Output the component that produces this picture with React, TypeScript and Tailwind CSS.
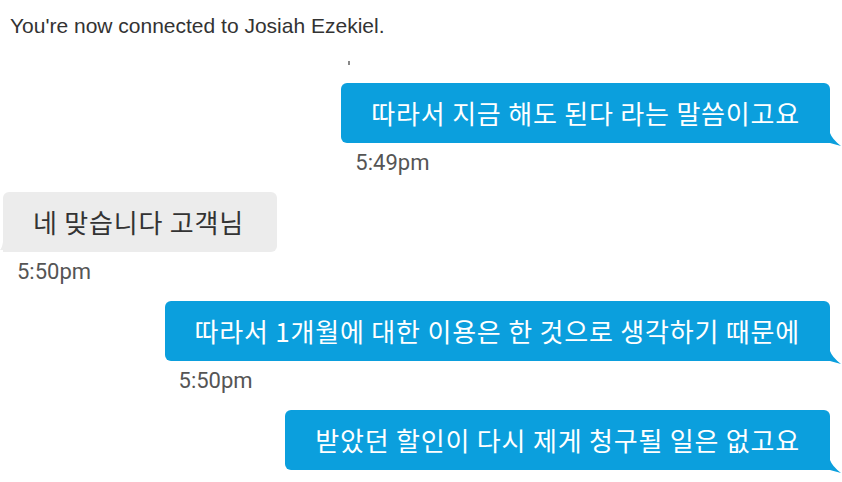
import type { ReactNode } from 'react';

type Msg = { side: 'me' | 'them'; text: string; time?: string };

const messages: Msg[] = [
  { side: 'me', text: '따라서 지금 해도 된다 라는 말씀이고요', time: '5:49pm' },
  { side: 'them', text: '네 맞습니다 고객님', time: '5:50pm' },
  { side: 'me', text: '따라서 1개월에 대한 이용은 한 것으로 생각하기 때문에', time: '5:50pm' },
  { side: 'me', text: '받았던 할인이 다시 제게 청구될 일은 없고요' },
];

const korean = { fontFamily: '"Noto Sans CJK KR", "Noto Sans", sans-serif' };
const stamp = { fontFamily: 'Roboto, "Noto Sans", sans-serif' };

function Bubble({ side, children }: { side: Msg['side']; children: ReactNode }) {
  const mine = side === 'me';
  return (
    <div
      className={
        mine
          ? 'relative h-[60px] flex items-center rounded-md rounded-br-none bg-[#0b9fdd] px-[30px] text-white'
          : 'relative h-[60px] flex items-center rounded-md rounded-bl-none bg-[#ececec] pl-[30px] pr-[33px] text-[#333]'
      }
    >
      <span className="text-[26px] leading-none tracking-[0.8px] whitespace-nowrap" style={korean}>
        {children}
      </span>
      {mine ? (
        <svg className="absolute left-full bottom-[-3px]" width="11" height="13" viewBox="0 0 11 13">
          <path d="M0 0 Q2 6 11 13 L0 10 Z" fill="#0b9fdd" />
        </svg>
      ) : (
        <svg className="absolute right-full bottom-[2px]" width="3" height="8" viewBox="0 0 3 8">
          <path d="M3 0 Q2 6 0 8 L3 8 Z" fill="#ececec" />
        </svg>
      )}
    </div>
  );
}

export default function App() {
  return (
    <div className="w-[842px] h-[482px] overflow-hidden bg-white">
      <p
        className="pl-[10px] pt-[14px] text-[21px] leading-[24px] text-[#333]"
        style={{ fontFamily: '"Liberation Sans", Arial, sans-serif' }}
      >
        You're now connected to Josiah Ezekiel.
      </p>

      <div className="flex flex-col pr-[12px] pl-[3px] mt-[23px]">
        {messages.map((m, i) => (
          <div
            key={i}
            className={
              (m.side === 'me' ? 'self-end' : 'self-start') +
              ' flex flex-col items-start ' +
              (i === 0 ? '' : 'mt-[17px]')
            }
          >
            {i === 0 && <div className="ml-[7px] mb-[18px] h-[4px] w-[2px] bg-[#888]" />}
            <Bubble side={m.side}>{m.text}</Bubble>
            {m.time && (
              <span className="pt-[8px] pl-[14px] text-[22px] leading-[24px] text-[#555]" style={stamp}>
                {m.time}
              </span>
            )}
          </div>
        ))}
      </div>
    </div>
  );
}
